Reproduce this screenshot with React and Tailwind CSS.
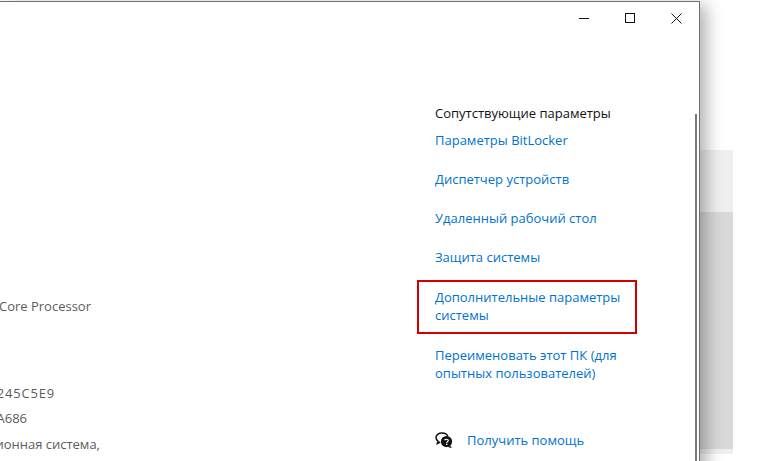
import React from "react";

const font = { fontFamily: '"Open Sans", "Noto Sans", sans-serif' };

const links = ["Параметры BitLocker", "Диспетчер устройств", "Удаленный рабочий стол", "Защита системы"];

// Left part of the window is cut off by the screenshot, so rows are right aligned and clipped
const InfoRow = ({ width, className, children }) => (
	<div className={`flex justify-end overflow-hidden whitespace-nowrap text-[13px] leading-[18px] text-[#5c5c5c] ${className}`} style={{ width }}>
		<span className="shrink-0">{children}</span>
	</div>
);

const HelpIcon = () => (
	<svg width="18" height="17" viewBox="0 0 18 17" className="shrink-0">
		<path d="M7 1C3.4 1 1 3 1 5.6c0 1.5.8 2.7 2 3.5L2.3 11.5l2.9-1.5" fill="none" stroke="#111" strokeWidth="1.5" />
		<path d="M7 1c3 0 5.2 1.4 5.8 3.4" fill="none" stroke="#111" strokeWidth="1.5" />
		<circle cx="11.5" cy="9.5" r="5.6" fill="#111" />
		<path d="M15 13.5l2 2.8-4-1.4z" fill="#111" />
		<path d="M9.7 8.2c.1-1.2 3.6-1.4 3.6.4 0 1.1-1.6 1.1-1.6 2.2" fill="none" stroke="#fff" strokeWidth="1.2" />
		<rect x="11" y="11.6" width="1.4" height="1.4" fill="#fff" />
	</svg>
);

export default function App() {
	return (
		<div className="flex w-[773px] h-[461px] overflow-hidden bg-white" style={font}>
			{/* Settings window */}
			<div className="relative z-10 flex flex-col shrink-0 w-[700px] h-[480px] mt-px bg-white border-t border-r border-[#6f6f6f] shadow-[6px_4px_16px_rgba(0,0,0,0.32)]">
				{/* Title bar */}
				<div className="flex justify-end h-[32px] shrink-0">
					<div className="flex items-center justify-center w-[46px]">
						<div className="w-[10px] h-px bg-[#111]" />
					</div>
					<div className="flex items-center justify-center w-[46px]">
						<div className="w-[10px] h-[10px] border border-[#111]" />
					</div>
					<div className="flex items-center justify-center w-[46px]">
						<svg width="11" height="11" viewBox="0 0 11 11">
							<path d="M.5.5l10 10M10.5.5l-10 10" stroke="#111" strokeWidth="1" fill="none" />
						</svg>
					</div>
				</div>

				<div className="relative flex flex-1">
					{/* System info column */}
					<div className="flex flex-col w-[435px] shrink-0 pt-[263px]">
						<InfoRow width={91}>AMD Ryzen 5 3600 6-Core Processor</InfoRow>
						<InfoRow width={55} className="mt-[69px] tracking-[0.8px]">00331-10000-00001-1245C5E9</InfoRow>
						<InfoRow width={27} className="mt-[7px]">00331-AA686</InfoRow>
						<InfoRow width={100} className="mt-[8px]">64-разрядная операционная система,</InfoRow>
					</div>

					{/* Related settings */}
					<div className="flex flex-col w-[210px] pt-[70px] text-[13px] leading-[18px] text-[#0073cf]">
						<div className="text-[#111] whitespace-nowrap">Сопутствующие параметры</div>
						<div className="flex flex-col gap-[21px] mt-[9px]">
							{links.map((label) => (
								<div key={label} className="whitespace-nowrap">{label}</div>
							))}
						</div>
						<div className="relative mt-[22px]">
							Дополнительные параметры системы
							<div className="absolute -left-[18px] -top-[8px] w-[220px] h-[54px] border-2 border-[#d30000]" />
						</div>
						<div className="mt-[22px]">Переименовать этот ПК (для опытных пользователей)</div>
						<div className="flex items-center gap-[14px] mt-[49px]">
							<HelpIcon />
							<span className="whitespace-nowrap">Получить помощь</span>
						</div>
					</div>

					{/* Scrollbar */}
					<div className="absolute right-[2px] top-[80px] bottom-0 w-[2px] bg-[#7a7a7a]" />
				</div>
			</div>

			{/* Window behind */}
			<div className="flex flex-col w-[33px] shrink-0 pt-[150px]">
				<div className="h-[62px] bg-[#efefef]" />
				<div className="h-[237px] bg-[#d9d9d9]" />
				<div className="h-[5px] bg-[#efefef]" />
			</div>
		</div>
	);
}
